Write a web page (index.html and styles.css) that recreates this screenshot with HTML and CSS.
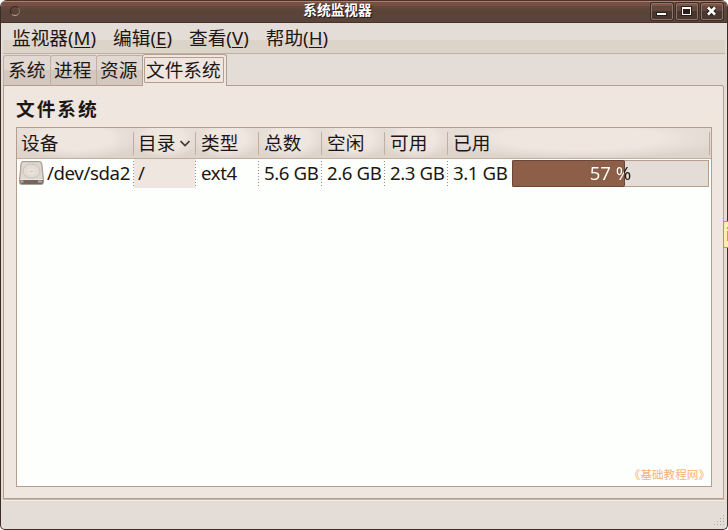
FILE: index.html
```html
<!DOCTYPE html>
<html lang="zh-CN">
<head>
<meta charset="utf-8">
<title>系统监视器</title>
<link rel="stylesheet" href="styles.css">
</head>
<body>
<div class="window">
  <header class="titlebar">
    <span class="orb"></span>
    <h1 class="title">系统监视器</h1>
    <div class="controls">
      <span class="control"><svg width="20" height="15" viewBox="0 0 20 15"><path class="shade" d="M4 8h11v4H4z"/><path class="glyph" d="M5 9h9v2H5z"/></svg></span>
      <span class="control"><svg width="20" height="15" viewBox="0 0 20 15" fill-rule="evenodd"><path class="shade" d="M4 2h11v10H4z"/><path class="glyph" d="M5 3h9v8H5zM6 5v5h7V5z"/></svg></span>
      <span class="control"><svg width="20" height="15" viewBox="0 0 20 15"><path class="xshade" d="M6.500 4l6 6M12.500 4l-6 6"/><path class="xglyph" d="M6 3.500l7 7M13 3.500l-7 7"/></svg></span>
    </div>
  </header>
  <nav class="menubar">
    <span>监视器(<u>M</u>)</span><span>编辑(<u>E</u>)</span><span>查看(<u>V</u>)</span><span>帮助(<u>H</u>)</span>
  </nav>
  <div class="tabs">
    <span class="tab first">系统</span><span class="tab">进程</span><span class="tab">资源</span><span class="tab active"><span class="focus">文件系统</span></span>
  </div>
  <main class="panel">
    <h2 class="heading">文件系统</h2>
    <section class="table">
      <div class="row head">
        <span class="cell">设备</span>
        <span class="cell">目录<svg class="sort" width="10" height="7" viewBox="0 0 10 7"><path d="M.5 1l4.500 4.500L9.500 1"/></svg></span>
        <span class="cell">类型</span><span class="cell">总数</span><span class="cell">空闲</span><span class="cell">可用</span><span class="cell last">已用</span>
      </div>
      <div class="row data">
        <span class="cell device"><svg class="disk" width="25" height="25" viewBox="0 0 25 25">
          <path d="M4 .5h16.500q2 0 2.300 2L24.500 18v3.500q0 2-2 2h-20q-2 0-2-2V18L2 2.500q.2-2 2-2z" fill="#c9beb4" stroke="#aa9d93"/>
          <path d="M4.500 1.500H20q1.500 0 1.700 1.500l1.800 15H1.500L3 3q.2-1.500 1.500-1.500z" fill="#dfd8d1"/>
          <ellipse cx="12.500" cy="10" rx="8.500" ry="7" fill="#e3dcd5" stroke="#cbc1b8"/>
          <ellipse cx="12.500" cy="10.500" rx="3" ry="2.200" fill="#dcd3cb" stroke="#f5f0eb"/>
          <path d="M1 18.500h23V21q0 2-2 2H3q-2 0-2-2z" fill="#75655f"/>
          <path d="M1 18.500h23" stroke="#eee8e2"/>
          <path d="M1.500 20.500h3M19 20.500h4" stroke="#b9ada4" stroke-width="2"/>
        </svg>/dev/sda2</span>
        <span class="cell sorted">/</span><span class="cell">ext4</span><span class="cell">5.6 GB</span><span class="cell">2.6 GB</span><span class="cell">2.3 GB</span>
        <span class="cell used"><span>3.1 GB</span><span class="bar"><span class="fill" style="width:57%"></span><span class="pct">57 %</span></span></span>
      </div>
      <div class="watermark">《基础教程网》</div>
    </section>
  </main>
  <footer class="statusbar"><svg class="grip" width="12" height="12" viewBox="0 0 12 12"><path d="M10 0h1v1h-1zM7 3h1v1H7zM10 3h1v1h-1zM4 6h1v1H4zM7 6h1v1H7zM10 6h1v1h-1zM1 9h1v1H1zM4 9h1v1H4zM7 9h1v1H7zM10 9h1v1h-1z"/></svg></footer>
</div>
<div class="tip"><svg width="4" height="25" viewBox="0 0 4 25"><path d="M3 5h1v2H3zM3 9h1v10H3z"/></svg></div>
</body>
</html>
```
FILE: styles.css
```css
* { box-sizing: border-box; }
body {
  margin: 0;
  width: 728px;
  height: 530px;
  overflow: hidden;
  position: relative;
  background: #fff;
  color: #1c1714;
  font: 18.67px/24px "Noto Sans", "Noto Sans CJK SC", sans-serif;
}
.window {
  width: 728px;
  height: 530px;
  display: flex;
  flex-direction: column;
  border: 1px solid #3d2d27;
  border-top: 0;
  border-radius: 7px 7px 5px 5px;
  background: #e4dcd6;
  overflow: hidden;
}
.titlebar {
  height: 23px;
  flex: none;
  display: grid;
  grid-template-columns: 74px 1fr 72px;
  align-items: center;
  padding: 0 4px 0 9px;
  background: linear-gradient(#4b312a 0 1px, #a87f70 1px 2px, #754f41 2px 6px, #65493d 6px 7px, #5a443a 11px 22px, #44322b 22px);
}
.orb {
  width: 10px;
  height: 10px;
  margin-bottom: 1px;
  border: 1px solid #33251f;
  border-color: #33251f #8b746a #c0aaa0 #33251f;
  border-radius: 50%;
}
.title {
  margin: 0 0 3px;
  padding: 0 65px 0 5px;
  text-align: center;
  font-size: 13.7px;
  line-height: 20px;
  font-weight: 700;
  color: #fff;
  text-shadow: 1px 1px 1px #1b110d;
}
.controls { display: flex; gap: 3px; }
.control {
  width: 22px;
  height: 17px;
  border: 1px solid #8d7468;
  border-radius: 2px;
  background: linear-gradient(#7c5546 0 2px, #64483d 2px 7px, #49372f 7px);
  box-shadow: 0 0 0 1px #3d2c26;
}
.control svg { display: block; }
.shade { fill: #2b1e19; }
.glyph { fill: #fff; }
.xshade { stroke: #2b1e19; stroke-width: 5; }
.xglyph { stroke: #fff; stroke-width: 2.5; }
.menubar {
  height: 31px;
  flex: none;
  display: flex;
  gap: 17px;
  margin: 0 2px;
  padding: 3px 0 0 9px;
  background: linear-gradient(#e4dcd6 0 17px, #dcd3c9 17px);
  border-bottom: 1px solid #bfafa5;
}
.menubar u { text-underline-offset: 2px; text-decoration-thickness: 1px; }
.tabs {
  height: 32px;
  flex: none;
  display: flex;
  align-items: flex-end;
  padding-left: 2px;
  position: relative;
  z-index: 1;
}
.tab {
  width: 46px;
  height: 31px;
  padding: 2px 0 0 3px;
  white-space: nowrap;
  border: 1px solid #c3afa2;
  border-right: 0;
  border-bottom-color: #b59e8e;
  border-radius: 3px 0 0 0;
  background: linear-gradient(#e0d8d1 0 14px, #d3c7be 14px);
}
.tab.first { width: 47px; padding-left: 4px; }
.tab.active {
  width: 85px;
  height: 32px;
  padding: 2px 1px;
  border: 1px solid #b59e8e;
  border-bottom: 0;
  border-radius: 3px 3px 0 0;
  background: #efe6e0;
}
.focus {
  display: block;
  width: 80px;
  height: 26px;
  line-height: 23px;
  padding-left: 1px;
  border: 1px solid #b59e8e;
  border-radius: 1px;
}
.panel {
  height: 414px;
  flex: none;
  margin: -1px 3px 0 2px;
  padding: 11px 12px 0;
  border: 1px solid #b59e8e;
  border-radius: 0 2px 0 0;
  background: #efe6e0;
}
.heading {
  margin: 0 0 6px;
  font-size: 18.67px;
  line-height: 24px;
  letter-spacing: 2px;
  font-weight: 700;
}
.table {
  width: 696px;
  height: 360px;
  position: relative;
  border: 1px solid #b59e8e;
  background: #fdfffc;
}
.row { display: grid; grid-template-columns: 117px 62px 63px 63px 63px 63px 1fr; }
.head {
  height: 31px;
  background: linear-gradient(#e6ddd7, #ddd3c9);
  border-bottom: 1px solid #c3afa2;
}
.cell { display: block; padding-left: 5px; white-space: nowrap; }
.head .cell {
  padding-top: 3px;
  background: linear-gradient(#c3afa2, #c3afa2) right 4px/1px 23px no-repeat, radial-gradient(ellipse 55% 70% at 50% 33%, #efe6e0 0 55%, #e8dfd9 75%, #e2d9d200 100%);
}
.head .cell:first-child { padding-left: 4px; }
.head .cell:nth-child(2) { padding-left: 4px; }
.head .last { background-position: right 1px top 4px, 0 0; }
.sort { margin-left: 5px; vertical-align: 3px; fill: none; stroke: #493a34; stroke-width: 1.7; }
.data { height: 29px; letter-spacing: -.4px; }
.data .cell {
  padding-top: 2px;
  height: 29px;
  background: repeating-linear-gradient(#978b85 0 1px, #fdfffc 1px 3px) right 2px/1px 26px no-repeat;
}
.data .device { display: flex; padding-left: 2px; gap: 3px; }
.disk { flex: none; }
.data .sorted { padding-left: 4px; background-color: #efe6e0; }
.data .used { display: flex; gap: 4px; background: none; padding-top: 1px; }
.used > span:first-child { padding-top: 1px; width: 55px; }
.bar {
  width: 197px;
  height: 27px;
  position: relative;
  border: 1px solid #b59e8e;
  background: #e4dcd6;
  letter-spacing: 0;
}
.fill { display: block; height: 25px; background: #8d5f49; box-shadow: 0 0 0 1px #6c4536; border-radius: 1px; }
.pct {
  position: absolute;
  inset: 0;
  text-align: center;
  color: transparent;
  background: linear-gradient(90deg, #fff 57%, #1c1714 57%);
  background-clip: text;
}
.watermark {
  position: absolute;
  right: 1px;
  bottom: 2px;
  font: 11.6px/20px "Noto Sans CJK SC", sans-serif;
  color: #fbb273;
}
.statusbar {
  flex: 1;
  display: flex;
  align-items: flex-end;
  justify-content: flex-end;
  margin: 0 2px;
  border-top: 1px solid #c8b5a8;
  box-shadow: inset 0 1px #f2ebe6;
}
.grip { fill: #b5a498; margin-bottom: 2px; }
.tip {
  position: absolute;
  right: 0;
  top: 221px;
  width: 5px;
  height: 27px;
  border: 1px solid #c99138;
  border-right: 0;
  background: #fcedb0;
}
.tip svg { display: block; fill: #d49a3a; }
```
